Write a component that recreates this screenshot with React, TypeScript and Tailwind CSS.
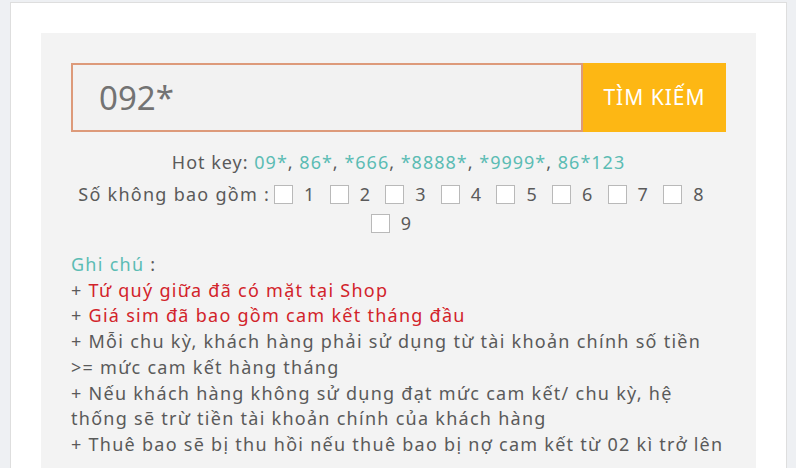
import React from "react";

const HOTKEYS = ["09*", "86*", "*666", "*8888*", "*9999*", "86*123"];

function Box({ n }: { n: number }) {
  return (
    <span className="inline-flex items-center mr-[14px]">
      <span className="w-[19px] h-[19px] bg-white border border-[#b9b9b9] mr-[11px]" />
      <span>{n}</span>
    </span>
  );
}

export default function App() {
  return (
    <div
      className="w-[796px] h-[468px] overflow-hidden bg-[#eef0f3] pt-[2px] pl-[10px]"
      style={{ fontFamily: '"Noto Sans", "Open Sans", sans-serif' }}
    >
      <div className="w-[777px] h-[480px] bg-white border border-[#dedede] pt-[30px] pl-[30px]">
        <div className="w-[715px] h-[460px] bg-[#f3f3f3] px-[30px] pt-[30px] text-[#5a5a5a] text-[18px] tracking-[1.27px]">
          <div className="flex h-[69px] tracking-normal">
            <div className="flex-1 flex items-center border-2 border-[#dd9a7a] bg-[#f2f2f2] pl-[26px] text-[33px] text-[#737373]">
              092*
            </div>
            <button className="w-[143px] bg-[#fdb714] text-white text-[21px] tracking-[1px]">
              TÌM KIẾM
            </button>
          </div>

          <div className="mt-[17px] text-center leading-[26px] tracking-[1px]">
            Hot key:{" "}
            {HOTKEYS.map((k, i) => (
              <span key={k}>
                <span className="text-[#5bbcb4]">{k}</span>
                {i < HOTKEYS.length - 1 ? ", " : ""}
              </span>
            ))}
          </div>

          <div className="mt-[5px] text-center leading-[29px]">
            <div className="flex justify-center items-center">
              <span className="mr-[4px]">Số không bao gồm :</span>
              {[1, 2, 3, 4, 5, 6, 7, 8].map((n) => (
                <Box key={n} n={n} />
              ))}
            </div>
            <div className="flex justify-center items-center">
              <Box n={9} />
            </div>
          </div>

          <div className="mt-[14px] leading-[25.7px] whitespace-nowrap">
            <div className="text-[#5bbcb4]">
              Ghi chú <span className="text-[#5a5a5a]">:</span>
            </div>
            <div>
              + <span className="text-[#d2232a]">Tứ quý giữa đã có mặt tại Shop</span>
            </div>
            <div>
              + <span className="text-[#d2232a]">Giá sim đã bao gồm cam kết tháng đầu</span>
            </div>
            <div>+ Mỗi chu kỳ, khách hàng phải sử dụng từ tài khoản chính số tiền</div>
            <div>&gt;= mức cam kết hàng tháng</div>
            <div>+ Nếu khách hàng không sử dụng đạt mức cam kết/ chu kỳ, hệ</div>
            <div>thống sẽ trừ tiền tài khoản chính của khách hàng</div>
            <div>+ Thuê bao sẽ bị thu hồi nếu thuê bao bị nợ cam kết từ 02 kì trở lên</div>
          </div>
        </div>
      </div>
    </div>
  );
}
